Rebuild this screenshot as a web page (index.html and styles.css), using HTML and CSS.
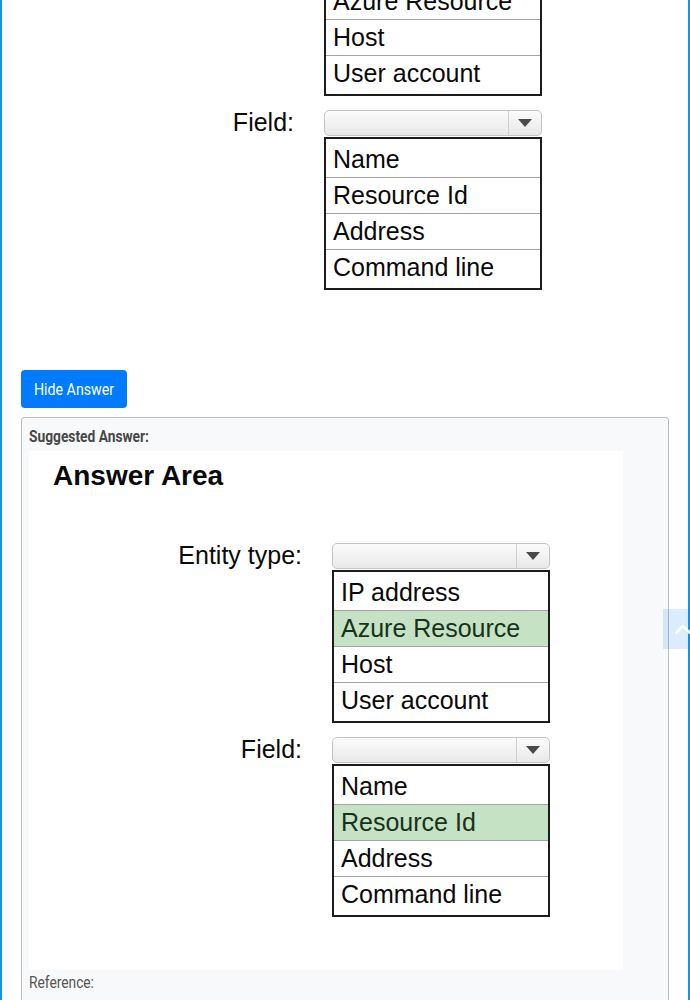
FILE: index.html
```html
<!DOCTYPE html>
<html lang="en">
<head>
<meta charset="utf-8">
<title>Answer</title>
<link rel="stylesheet" href="styles.css">
</head>
<body>
<div class="page">
  <div class="shot shot-question">
    <h2 class="shot-title">Answer Area</h2>
    <div class="form-grid">
      <div class="label">Entity type:</div>
      <div class="control">
        <div class="select"><span class="select-btn"><span class="caret"></span></span></div>
        <ul class="options">
          <li>IP address</li>
          <li>Azure Resource</li>
          <li>Host</li>
          <li>User account</li>
        </ul>
      </div>
      <div class="label">Field:</div>
      <div class="control">
        <div class="select"><span class="select-btn"><span class="caret"></span></span></div>
        <ul class="options">
          <li>Name</li>
          <li>Resource Id</li>
          <li>Address</li>
          <li>Command line</li>
        </ul>
      </div>
    </div>
  </div>

  <button class="btn-answer" type="button"><span class="condensed">Hide Answer</span></button>

  <div class="answer-card">
    <div class="answer-label"><span class="condensed">Suggested Answer:</span></div>
    <div class="shot">
      <h2 class="shot-title">Answer Area</h2>
      <div class="form-grid">
        <div class="label">Entity type:</div>
        <div class="control">
          <div class="select"><span class="select-btn"><span class="caret"></span></span></div>
          <ul class="options">
            <li>IP address</li>
            <li class="picked">Azure Resource</li>
            <li>Host</li>
            <li>User account</li>
          </ul>
        </div>
        <div class="label">Field:</div>
        <div class="control">
          <div class="select"><span class="select-btn"><span class="caret"></span></span></div>
          <ul class="options">
            <li>Name</li>
            <li class="picked">Resource Id</li>
            <li>Address</li>
            <li>Command line</li>
          </ul>
        </div>
      </div>
    </div>
    <div class="reference"><span class="condensed">Reference:</span></div>
  </div>
</div>

<a class="to-top" href="#" aria-label="Back to top">
  <svg width="40" height="40" viewBox="0 0 40 40"><path d="M13 24 L20 17 L27 24" fill="none" stroke="#fff" stroke-width="2.5" stroke-linecap="round" stroke-linejoin="round"/></svg>
</a>
</body>
</html>
```

FILE: styles.css
```css
html, body {
  margin: 0;
  padding: 0;
  background: #fff;
}

body {
  font-family: Roboto, "Liberation Sans", sans-serif;
  overflow: hidden;
}

.page {
  box-sizing: border-box;
  width: 690px;
  min-height: 1000px;
  border-left: 2px solid #1196e6;
  border-right: 2px solid #1196e6;
  padding: 0 19px;
  overflow: hidden;
}

.condensed {
  display: inline-block;
  transform: scaleX(0.86);
  transform-origin: left center;
  white-space: nowrap;
}

/* screenshot image block */
.shot {
  box-sizing: border-box;
  width: 594px;
  height: 519px;
  background: #fff;
  padding: 9px 0 0 24px;
  font-family: "Liberation Sans", Arial, sans-serif;
  color: #0a0a0a;
}

.shot-question {
  margin-top: -176px;
}

.shot-title {
  margin: 0;
  font-size: 28px;
  line-height: 32px;
  font-weight: bold;
  color: #0a0a0a;
}

.form-grid {
  display: grid;
  grid-template-columns: 249px 218px;
  column-gap: 30px;
  row-gap: 14px;
  margin-top: 51px;
}

.label {
  text-align: right;
  font-size: 25px;
  line-height: 24px;
  height: 26px;
  color: #0a0a0a;
}

.control {
  display: flex;
  flex-direction: column;
  gap: 1px;
}

.select {
  box-sizing: border-box;
  height: 26px;
  border: 1px solid #c4c4c4;
  border-radius: 5px;
  background: linear-gradient(#fbfbfb, #e9e9e9);
  display: flex;
  justify-content: flex-end;
}

.select-btn {
  width: 32px;
  border-left: 1px solid #cfcfcf;
  display: flex;
  align-items: center;
  justify-content: center;
}

.caret {
  width: 0;
  height: 0;
  border-left: 7px solid transparent;
  border-right: 7px solid transparent;
  border-top: 8px solid #4a4a4a;
}

.options {
  list-style: none;
  margin: 0;
  padding: 3px 0;
  border: 2px solid #1c1c1c;
  background: #fff;
}

.options li {
  font-size: 25px;
  line-height: 35px;
  padding-left: 7px;
  white-space: nowrap;
}

.options li + li {
  border-top: 1px solid #a3a3a3;
}

.options li.picked {
  background: #c5e2c4;
  color: #17321a;
}

/* button */
.btn-answer {
  display: block;
  box-sizing: border-box;
  width: 106px;
  margin: 27px 0 9px;
  height: 38px;
  padding: 0 0 0 13px;
  border: none;
  border-radius: 4px;
  background: #007bff;
  color: #fff;
  font-family: Roboto, "Liberation Sans", sans-serif;
  font-size: 16.5px;
  text-align: left;
  cursor: pointer;
}

/* answer card */
.answer-card {
  border: 1px solid #bdbdbd;
  border-radius: 3px;
  background: #f8f9fa;
  padding: 9px 7px 10px;
}

.answer-label {
  font-size: 16px;
  line-height: 20px;
  font-weight: bold;
  color: #474747;
  margin-bottom: 4px;
}

.reference {
  font-size: 16px;
  line-height: 20px;
  color: #555;
  margin-top: 3px;
}

.to-top {
  position: fixed;
  left: 663px;
  top: 609px;
  width: 40px;
  height: 40px;
  background: rgba(0, 123, 255, 0.14);
  display: block;
}

.to-top svg {
  display: block;
}
```
